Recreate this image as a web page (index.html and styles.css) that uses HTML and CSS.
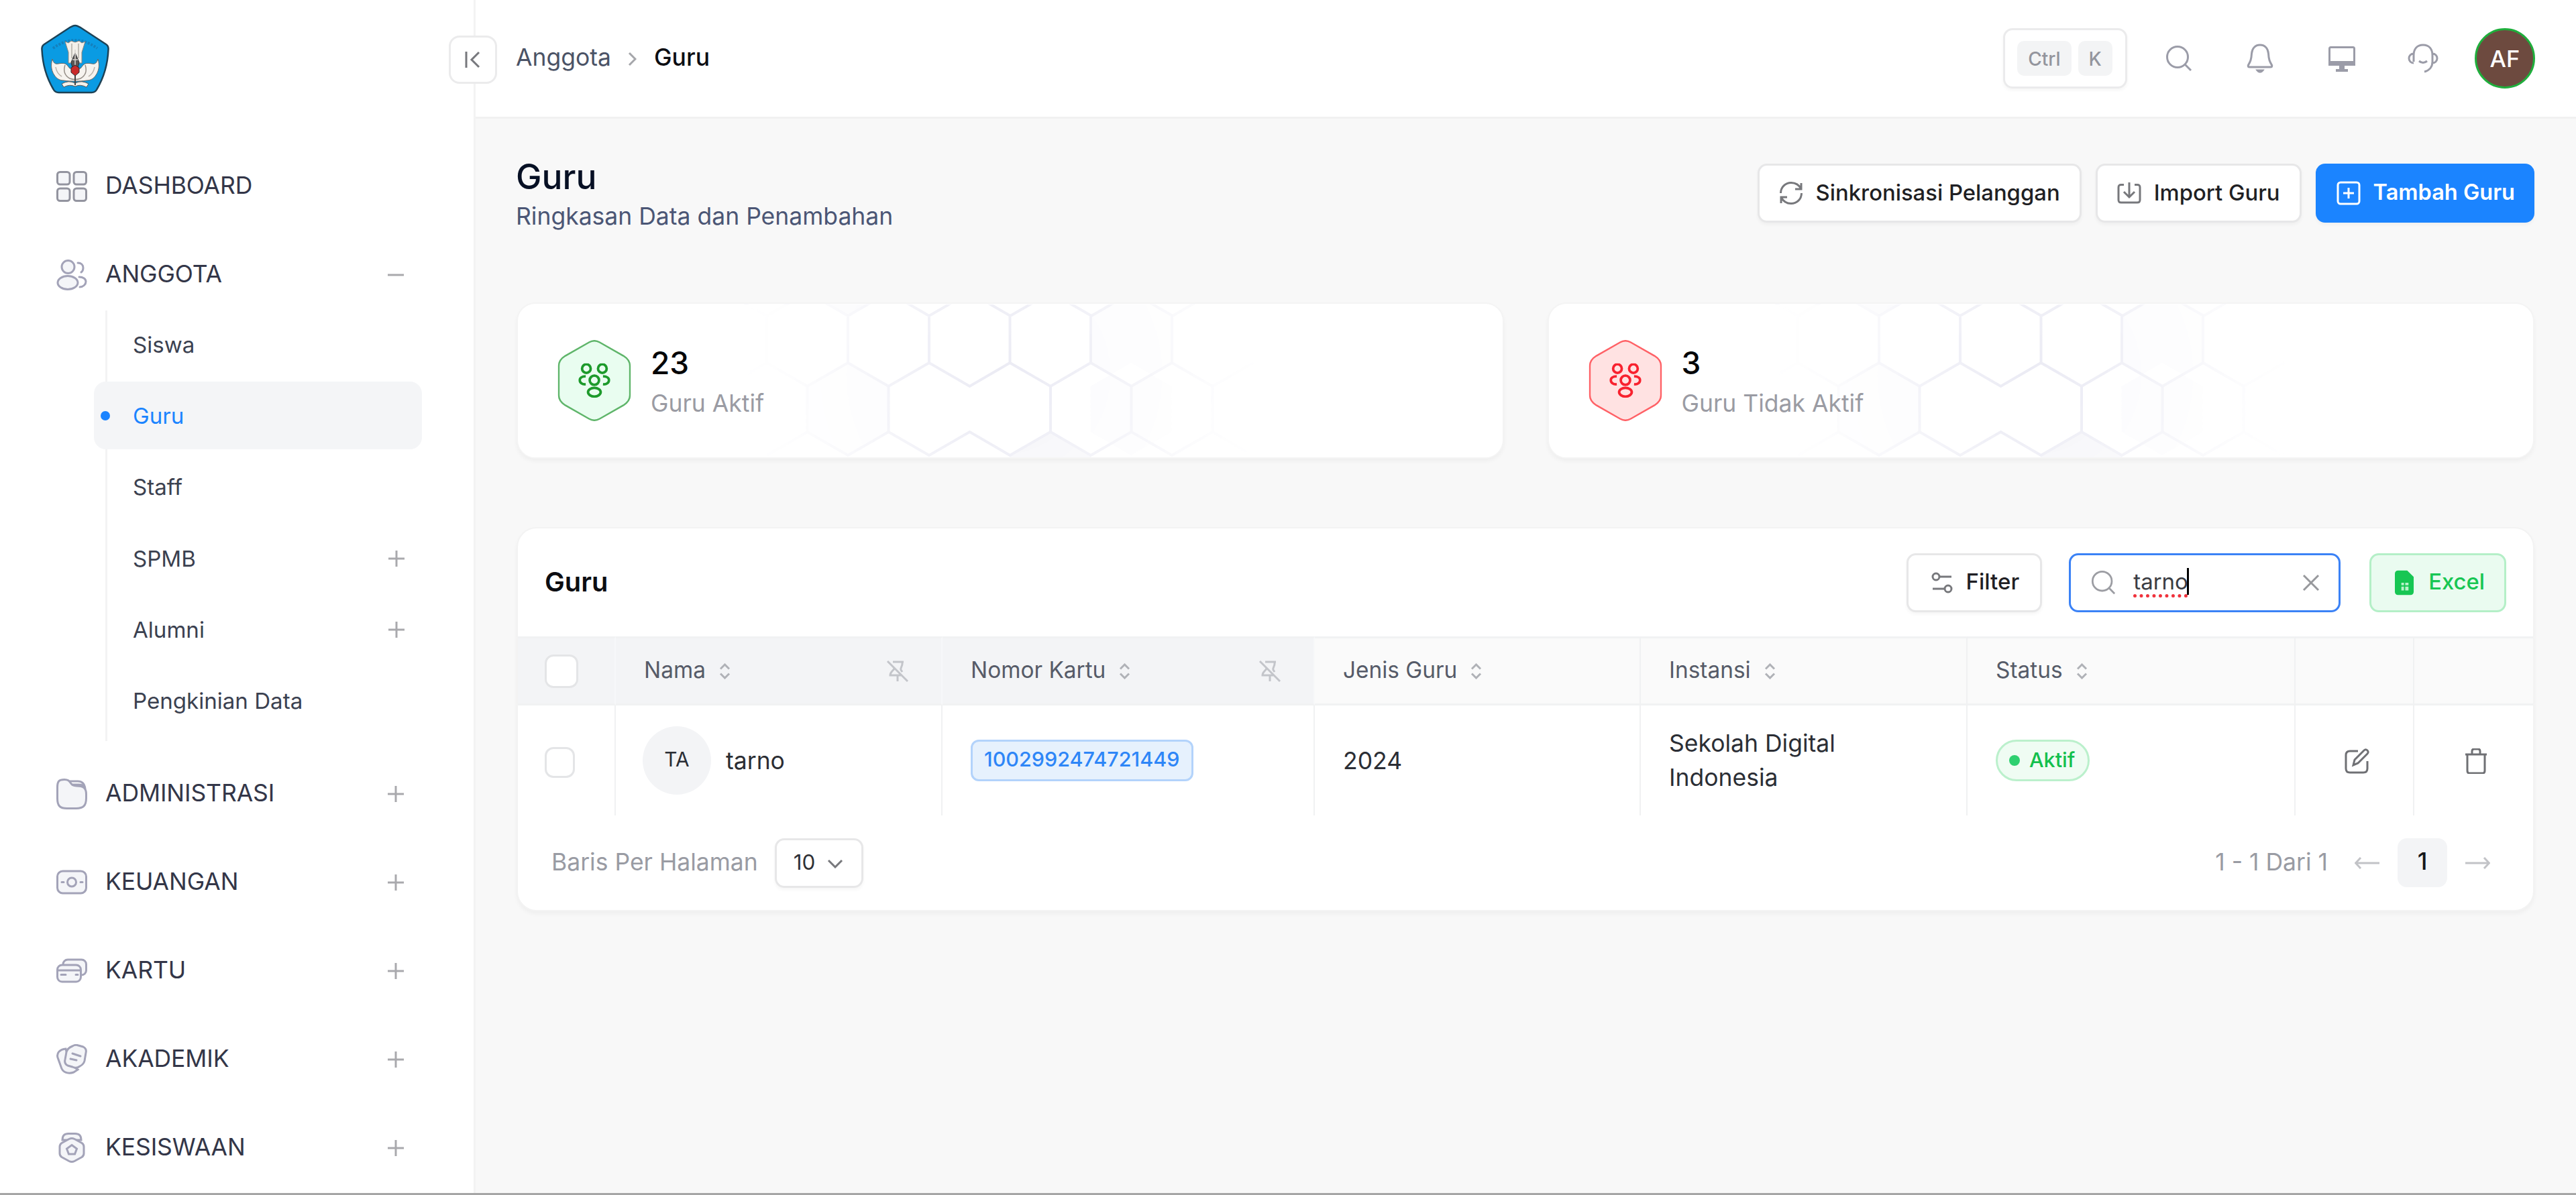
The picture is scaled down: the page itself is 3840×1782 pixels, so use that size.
FILE: index.html
```html
<!DOCTYPE html>
<html lang="id">
<head>
  <meta charset="UTF-8" />
  <meta name="viewport" content="width=device-width, initial-scale=1.0"/>
  <title>Guru</title>
  <link rel="stylesheet" href="styles.css">
</head>
<body>
  <!-- Shared shapes -->
  <svg class="defs" width="0" height="0">
    <defs>
      <symbol id="plus" viewBox="0 0 24 24"><path d="M12 0v24M0 12h24"/></symbol>
      <symbol id="sort" viewBox="0 0 17 24"><path d="M2 8.500l6.500-6.500 6.500 6.500M2 15.500l6.500 6.500 6.500-6.500"/></symbol>
      <symbol id="search" viewBox="0 0 40 40"><circle cx="18" cy="18" r="15.500"/><path d="M29 29l9 9"/></symbol>
      <symbol id="pinOff" viewBox="0 0 34 34"><path d="M2 2l30 30M17 23v9M10 3h16M24 3v3c0 4-3 5-2 9l2 3M12 12c0 4-6 5-6 11h16"/></symbol>
      <symbol id="people" viewBox="0 0 48 52">
        <circle cx="12" cy="8" r="6.500"/><circle cx="36" cy="8" r="6.500"/><circle cx="24" cy="25.500" r="7"/>
        <ellipse cx="24" cy="43.500" rx="9.500" ry="6.500"/>
        <path d="M11 19.500c-5.500 0-9 2.500-9 6s3.500 6.500 9 6M37 19.500c5.500 0 9 2.500 9 6s-3.500 6.500-9 6"/>
      </symbol>
      <symbol id="hexagon" viewBox="0 0 110 122">
        <path d="M47 3.500q8-4.500 16 0l36 20.500q9.500 6 9.500 15v44q0 9-9.500 15l-36 20.500q-8 4.500-16 0l-36-20.500q-9.500-6-9.500-15v-44q0-9 9.500-15z"/>
      </symbol>
      <radialGradient id="fade" gradientUnits="userSpaceOnUse" cx="725" cy="105" r="400">
        <stop offset="0" stop-color="#fff"/><stop offset=".3" stop-color="#fff" stop-opacity=".75"/><stop offset=".8" stop-color="#fff" stop-opacity=".1"/><stop offset="1" stop-color="#fff" stop-opacity="0"/>
      </radialGradient>
      <mask id="fadeMask" maskUnits="userSpaceOnUse" x="0" y="0" width="1466" height="232"><rect width="1466" height="232" fill="url(#fade)"/></mask>
      <symbol id="honeycomb" viewBox="0 0 1466 229">
        <g mask="url(#fadeMask)">
          <path class="comb-fill" d="M794 191l60.500 35v40h-121v-40zM432-17l60 35 60-35z"/>
          <path class="comb-soft" d="M492 88l60.500 35v68l-60.500 35-60.500-35v-68zM914 88l60.500 35v68l-60.500 35-60.500-35v-68zM854 18v70l60 35 61-35v-70l-61-35z"/>
          <path class="comb-line" d="M310-17l61 35 60.500-35 60.500 35 60.500-35 60.500 35 60.500-35 60.500 35 60.500-35 60.500 35 60.500-35 60.500 35 60.500-35
            M371 18v70M492 18v70M613 18v70M733.500 18v70M854 18v70M975 18v70
            M310 123l61-35 60.500 35 60.500-35 60.500 35 60.500-35 60.500 35 60-35 60.500 35 60-35 60.500 35 60.500-35 60.500 35 61-35
            M431.500 123v68M552.500 123v68M794 123v68M914.500 123v68M1035.500 123v68
            M371 226l60.500-35 60.500 35 60.500-35 60.500 35 60.500-35 60 35 60.500-35 60 35 60.500-35 60.500 35 60.500-35 60 35"/>
        </g>
      </symbol>
    </defs>
  </svg>

  <div class="app">
    <aside class="sidebar">
      <!-- Logo -->
      <svg class="logo" viewBox="0 0 102 104">
        <path d="M51 2c3 0 5 1.500 8 3l38 25c3 2 4 4 3.500 8-1 23-7 42-17 59-2 4-4 5-8 5h-49c-4 0-6-1-8-5-10-17-16-36-17-59-.500-4 .5-6 3.500-8l38-25c3-1.500 5-3 8-3z" fill="#0a9be3" stroke="#1d4256" stroke-width="2.500"/>
        <path d="M18 36q33-24 66 0" fill="none" stroke="#1480bd" stroke-width="4" stroke-dasharray="3 2"/>
        <path d="M36 26l5 2 4-3 6 2 6-2 4 3 5-2-5 16v16H41V42z" fill="#f3f0ea" stroke="#8a847c"/>
        <path d="M46 29v22M56 29v22" fill="none" stroke="#b3ada6" stroke-width="1.500"/>
        <path d="M17 52c2 6 4 8 9 7 6-1 10-1 13 2l4 5h16l4-5c3-3 7-3 13-2 5 1 7-1 9-7 3 10 1 18-3 24-3 5-8 8-14 8-6 1-10 1-17 1s-11 0-17-1c-6 0-11-3-14-8-4-6-6-14-3-24z" fill="#f6f3ef" stroke="#6a655f"/>
        <path d="M36 61c-3 9 0 16 7 20q8 3 16 0c7-4 10-11 7-20" fill="none" stroke="#968f88" stroke-width="1.500"/>
        <path d="M22 64c1 6 4 11 9 14M80 64c-1 6-4 11-9 14" fill="none" stroke="#b9b2aa" stroke-width="1.500"/>
        <path d="M45 57l6-14 6 14-2 8h-8z" fill="#5a5654"/><path d="M51 38v26M47 53h8" stroke="#d8d3cf" stroke-width="1.500"/>
        <path d="M51 61l6 4v7l-6 5-6-5v-7z" fill="#c92a2a"/>
        <path d="M31 89q10-6 20-1 10-5 20 1l-3 5q-10-5-17-1-8-4-17 1z" fill="#f3f0ea" stroke="#555"/>
        <path d="M51 77v14" stroke="#444" stroke-width="2"/>
      </svg>

      <nav class="menu">
        <a class="menu-item" href="#">
          <svg class="menu-icon dark" viewBox="0 0 46 46"><rect x="1.500" y="1.500" width="18.500" height="18.500" rx="4"/><rect x="26" y="1.500" width="18.500" height="18.500" rx="4"/><rect x="1.500" y="26" width="18.500" height="18.500" rx="4"/><rect x="26" y="26" width="18.500" height="18.500" rx="4"/></svg>
          <span class="menu-text">DASHBOARD</span>
        </a>
        <div class="menu-group">
          <a class="menu-item" href="#">
            <svg class="menu-icon" viewBox="0 0 46 46"><circle cx="17.500" cy="11" r="9.500"/><ellipse cx="17" cy="34.500" rx="15" ry="10"/><path class="no-fill" d="M32 5c5 0 8 3 8 7.500 0 3-1 5-3 6.500M34 26c6 0 10 3 10 7s-4 8-9 8"/></svg>
            <span class="menu-text">ANGGOTA</span>
            <svg class="toggle" viewBox="0 0 24 24"><path d="M0 12h24"/></svg>
          </a>
          <div class="submenu">
            <a class="submenu-item" href="#">Siswa</a>
            <a class="submenu-item active" href="#">Guru</a>
            <a class="submenu-item" href="#">Staff</a>
            <a class="submenu-item" href="#">SPMB<svg class="toggle"><use href="#plus"/></svg></a>
            <a class="submenu-item" href="#">Alumni<svg class="toggle"><use href="#plus"/></svg></a>
            <a class="submenu-item" href="#">Pengkinian Data</a>
          </div>
        </div>
        <a class="menu-item" href="#">
          <svg class="menu-icon" viewBox="0 0 46 46"><path d="M1.500 13C1.500 4 4 1.500 12 1.500c6 0 7 2 10 6 2 2.500 3 3 8 3.500 10 0 14.500 3 14.500 12v6c0 11-4 15.500-15 15.500H16c-11 0-14.500-4-14.500-15z"/><path class="no-fill" d="M20 4h12c7 0 10 4 11 11M24 9h10c4 0 6 1 8 4"/></svg>
          <span class="menu-text">ADMINISTRASI</span>
          <svg class="toggle"><use href="#plus"/></svg>
        </a>
        <a class="menu-item" href="#">
          <svg class="menu-icon" viewBox="0 0 46 46"><rect x="1.500" y="6" width="43" height="33" rx="8"/><circle cx="23" cy="22.500" r="6.500"/><path d="M8 22.500h3M36 22.500h3"/></svg>
          <span class="menu-text">KEUANGAN</span>
          <svg class="toggle"><use href="#plus"/></svg>
        </a>
        <a class="menu-item" href="#">
          <svg class="menu-icon" viewBox="0 0 46 46"><rect x="10" y="6" width="34.500" height="23" rx="7"/><rect x="1.500" y="14" width="35" height="25" rx="7"/><path d="M2 22h34M7 28.500h7M29 28.500h3"/></svg>
          <span class="menu-text">KARTU</span>
          <svg class="toggle"><use href="#plus"/></svg>
        </a>
        <a class="menu-item" href="#">
          <svg class="menu-icon" viewBox="0 0 46 46"><path d="M14 7C5 8 0 13 2 20l5 14c2 8 10 11 19 8l6-4-12-8z"/><path d="M24 3c3-2 6-2 9-1l7 2c4 2 5 5 4 9l-2 12c-1 4-3 6-7 8-4 3-7 3-11 1l-7-2c-4-2-5-5-4-9l2-11c1-4 4-7 9-9z"/><path d="M24 14l12 4M21 22l9 2"/></svg>
          <span class="menu-text">AKADEMIK</span>
          <svg class="toggle"><use href="#plus"/></svg>
        </a>
        <a class="menu-item" href="#">
          <svg class="menu-icon" viewBox="0 0 46 46"><path d="M9 11c0-7 3-9.500 9-9.500h10c6 0 9 2.500 9 9.500z"/><path d="M19 9.500q4-2 8 0l11 6q3 2 3 5.500v10q0 3.500-3 5.500l-11 6q-4 2-8 0l-11-6q-3-2-3-5.500v-10q0-3.500 3-5.500z"/><path d="M23 18.500l7.500 5.500-3 8h-9l-3-8z"/></svg>
          <span class="menu-text">KESISWAAN</span>
          <svg class="toggle"><use href="#plus"/></svg>
        </a>
      </nav>

      <button class="collapse"><svg viewBox="0 0 24 26"><path d="M2 1v24M21 2l-11 11 11 11"/></svg></button>
    </aside>

    <div class="content">
      <header class="topbar">
        <div class="breadcrumb">
          <span>Anggota</span>
          <svg viewBox="0 0 13 22"><path d="M2 2l9 9-9 9"/></svg>
          <span class="current">Guru</span>
        </div>
        <div class="top-actions">
          <div class="shortcut"><kbd>Ctrl</kbd><kbd>K</kbd></div>
          <div class="top-icons">
            <svg viewBox="-5 -5 50 50"><use href="#search" width="40" height="40"/></svg>
            <svg viewBox="0 0 50 50"><path d="M25 5c-8 0-12 6-12.500 13-.5 9-2 12-5 17-1 2 0 3 2 3h31c2 0 3-1 2-3-3-5-4.500-8-5-17C37 11 33 5 25 5z"/><path d="M21 43c2 3 6 3 8 0z"/></svg>
            <svg viewBox="0 0 50 50"><rect x="6.500" y="8.500" width="37" height="25" rx="2"/><path class="solid" d="M5 29h40v7H5zM21 36h8v6h-8zM16 41h18v4H16z"/></svg>
            <svg viewBox="0 0 50 50"><path d="M11 30V21C11 11 16 5 25 5s14 6 14 16v9c0 7-4 13-12 15M11 18c-4 0-7 3-7 7s3 7 7 7M39 18c4 0 7 3 7 7s-3 7-7 7M19 29q6 5 12 0"/></svg>
          </div>
          <div class="user">AF</div>
        </div>
      </header>

      <main class="page">
        <div class="page-head">
          <div>
            <h1>Guru</h1>
            <p>Ringkasan Data dan Penambahan</p>
          </div>
          <div class="page-buttons">
            <button class="btn">
              <svg viewBox="0 0 36 36"><path d="M33 3v9h-9M33 12C30 6 25 2.500 18 2.500 9.500 2.500 2.500 9 2.500 18M3 33v-9h9M3 24c3 6 8 9.500 15 9.500 8.500 0 15.500-6.500 15.500-15.500"/></svg>
              <span>Sinkronisasi Pelanggan</span>
            </button>
            <button class="btn">
              <svg viewBox="0 0 36 36"><path d="M10 5.500H6c-3 0-4 1-4 4V28c0 3 1 4 4 4h24c3 0 4-1 4-4V9.500c0-3-1-4-4-4h-4M18 2v21M10 16l8 8 8-8"/></svg>
              <span>Import Guru</span>
            </button>
            <button class="btn primary">
              <svg viewBox="0 0 36 36"><rect x="2" y="2" width="32" height="32" rx="4"/><path d="M18 10v16M10 18h16"/></svg>
              <span>Tambah Guru</span>
            </button>
          </div>
        </div>

        <!-- Summary cards -->
        <div class="stats">
          <div class="stat">
            <svg class="stat-bg" viewBox="0 0 1466 229" width="1466" height="229"><use href="#honeycomb"/></svg>
            <div class="stat-icon green">
              <svg viewBox="0 0 110 122"><use class="hex" href="#hexagon"/><use class="glyph" href="#people" x="31" y="35" width="48" height="52"/></svg>
            </div>
            <div class="stat-body">
              <strong>23</strong>
              <span>Guru Aktif</span>
            </div>
          </div>
          <div class="stat">
            <svg class="stat-bg" viewBox="0 0 1466 229" width="1466" height="229"><use href="#honeycomb"/></svg>
            <div class="stat-icon red">
              <svg viewBox="0 0 110 122"><use class="hex" href="#hexagon"/><use class="glyph" href="#people" x="31" y="35" width="48" height="52"/></svg>
            </div>
            <div class="stat-body">
              <strong>3</strong>
              <span>Guru Tidak Aktif</span>
            </div>
          </div>
        </div>

        <!-- Teacher table -->
        <section class="panel">
          <div class="toolbar">
            <h2>Guru</h2>
            <div class="tools">
              <button class="btn filter">
                <svg viewBox="0 0 32 32"><circle cx="7" cy="7" r="5"/><path d="M12 7h18M2 25h18"/><circle cx="25" cy="25" r="5"/></svg>
                <span>Filter</span>
              </button>
              <div class="search-box">
                <svg class="search-icon"><use href="#search"/></svg>
                <span class="query"><span class="typo">tarno</span></span>
                <svg class="clear" viewBox="0 0 26 26"><path d="M2 2l22 22M24 2L2 24"/></svg>
              </div>
              <button class="btn excel">
                <svg viewBox="0 0 30 38"><path class="sheet" d="M5 0h14l10 10v23c0 3-2 5-5 5H5c-3 0-5-2-5-5V5c0-3 2-5 5-5z"/><path class="cells" d="M10 19h4v4h-4zM16 19h5v4h-5zM10 25h4v6h-4zM16 25h5v6h-5z"/></svg>
                <span>Excel</span>
              </button>
            </div>
          </div>

          <table>
            <colgroup>
              <col class="col-check"><col class="col-name"><col class="col-card"><col class="col-type"><col class="col-school"><col class="col-status"><col class="col-act"><col class="col-act">
            </colgroup>
            <thead>
              <tr>
                <th class="pinned"><span class="check"></span></th>
                <th class="pinned"><div class="th"><span>Nama</span><svg class="sort"><use href="#sort"/></svg><svg class="pin"><use href="#pinOff"/></svg></div></th>
                <th class="pinned"><div class="th"><span>Nomor Kartu</span><svg class="sort"><use href="#sort"/></svg><svg class="pin"><use href="#pinOff"/></svg></div></th>
                <th><div class="th"><span>Jenis Guru</span><svg class="sort"><use href="#sort"/></svg></div></th>
                <th><div class="th"><span>Instansi</span><svg class="sort"><use href="#sort"/></svg></div></th>
                <th><div class="th"><span>Status</span><svg class="sort"><use href="#sort"/></svg></div></th>
                <th></th>
                <th></th>
              </tr>
            </thead>
            <tbody>
              <tr>
                <td><span class="check small"></span></td>
                <td><div class="person"><span class="initials">TA</span><span class="name">tarno</span></div></td>
                <td><span class="card-no">1002992474721449</span></td>
                <td>2024</td>
                <td>Sekolah Digital<br>Indonesia</td>
                <td><span class="status"><i></i>Aktif</span></td>
                <td class="action"><svg viewBox="0 0 38 38"><path d="M20 4H8C4 4 2 6 2 10v20c0 4 2 6 6 6h20c4 0 6-2 6-6V19M13 25l2-8L29 3c2-2 4-1 5 0s2 3 0 5L20 22z"/></svg></td>
                <td class="action"><svg viewBox="0 0 38 38"><path d="M3 9h32M13 8V4c0-2 1-3 3-3h6c2 0 3 1 3 3v4M6 9v24c0 2 1 4 3 4h20c2 0 3-2 3-4V9"/></svg></td>
              </tr>
            </tbody>
          </table>

          <div class="panel-foot">
            <div class="per-page">
              <span>Baris Per Halaman</span>
              <div class="select">10<svg viewBox="0 0 24 14"><path d="M2 2l10 10L22 2"/></svg></div>
            </div>
            <div class="pager">
              <span>1 - 1 Dari 1</span>
              <svg viewBox="0 0 38 18"><path d="M37 9H2M9 1L1.500 9 9 17"/></svg>
              <b>1</b>
              <svg viewBox="0 0 38 18"><path d="M1 9h35M29 1l7.500 8-7.500 8"/></svg>
            </div>
          </div>
        </section>
      </main>
    </div>
  </div>
</body>
</html>
```
FILE: styles.css
```css
:root {
  --bg: #f8f8f8;
  --border: #f0f1f2;
  --btn-border: #e7e7e8;
  --text: #2b2e35;
  --muted: #9a9ca5;
  --icon: #9b9ca8;
  --blue: #1b84ff;
  --green: #17c653;
}

* {
  margin: 0;
  padding: 0;
  box-sizing: border-box;
}

body {
  font-family: Inter, sans-serif;
  font-size: 35.5px;
  color: var(--text);
  background-color: var(--bg);
  border-bottom: 3px solid #a6a6a6;
  height: 1782px;
  overflow: hidden;
}

a {
  color: inherit;
  text-decoration: none;
}

svg {
  fill: none;
  stroke: currentColor;
  stroke-width: 3;
  flex-shrink: 0;
}

.defs {
  position: absolute;
}

.app {
  display: flex;
  height: 1779px;
}

/* Sidebar */
.sidebar {
  position: relative;
  width: 709px;
  flex-shrink: 0;
  background-color: #fff;
  border-right: 3px solid #f3f3f3;
  padding: 36px 77px 0 61px;
}

.logo {
  display: block;
  width: 102px;
  height: 104px;
  stroke-width: 1;
}

.menu {
  display: flex;
  flex-direction: column;
  gap: 26px;
  margin-top: 85px;
}

.menu-item {
  display: flex;
  align-items: center;
  height: 106px;
  padding: 0 28px 0 23px;
  color: #333648;
}

.menu-icon {
  width: 46px;
  height: 46px;
  margin-right: 27px;
  color: #a3a3b8;
  fill: #f4f5f8;
  stroke-linecap: round;
}

.menu-icon.dark {
  color: #93949f;
}

.no-fill {
  fill: none;
}

.menu-text {
  padding-bottom: 4px;
  letter-spacing: -0.1px;
}

.toggle {
  width: 24px;
  height: 24px;
  margin-left: auto;
  margin-right: -1px;
  color: #a9a9ad;
}

.submenu {
  display: flex;
  flex-direction: column;
  gap: 5.4px;
  height: 642px;
  margin-left: 96px;
  border-left: 3px solid #f3f3f4;
}

.submenu-item {
  position: relative;
  display: flex;
  align-items: center;
  height: 101px;
  margin-left: -20px;
  padding: 0 27px 0 58px;
  font-size: 33.1px;
  color: #3b4150;
}

.submenu-item.active {
  background-color: #f4f5f7;
  border-radius: 18px;
  color: var(--blue);
}

.submenu-item.active::before {
  content: "";
  position: absolute;
  left: 10px;
  width: 14px;
  height: 14px;
  border-radius: 50%;
  background-color: var(--blue);
}

.collapse {
  position: absolute;
  top: 53px;
  right: -35px;
  width: 72px;
  height: 72px;
  display: flex;
  align-items: center;
  justify-content: center;
  background-color: #fff;
  border: 3px solid #ebebec;
  border-radius: 16px;
  color: #77787d;
}

.collapse svg {
  width: 24px;
  height: 26px;
}

/* Top bar */
.content {
  flex: 1;
  min-width: 0;
}

.topbar {
  display: flex;
  align-items: center;
  justify-content: space-between;
  height: 177px;
  padding: 0 61px 0 60px;
  background-color: #fff;
  border-bottom: 3px solid #f1f1f1;
}

.breadcrumb {
  display: flex;
  align-items: center;
  color: #4b5366;
  padding-bottom: 3px;
}

.breadcrumb svg {
  width: 13px;
  height: 22px;
  margin: 4px 26px 0 25px;
  color: #a5a6aa;
}

.breadcrumb .current {
  font-weight: 500;
  color: #0c0d12;
}

.top-actions {
  display: flex;
  align-items: center;
  gap: 52px;
}

.shortcut {
  display: flex;
  align-items: center;
  justify-content: center;
  gap: 10px;
  width: 185px;
  height: 90px;
  border: 3px solid #ebebec;
  border-radius: 14px;
  box-shadow: 0 3px 5px rgba(0, 0, 0, 0.04);
}

kbd {
  height: 52px;
  padding: 0 16px;
  border-radius: 10px;
  background-color: #f3f4f5;
  color: #93959d;
  font: 500 28px/54px Inter, sans-serif;
}

.top-icons {
  display: flex;
  gap: 71.5px;
  color: var(--icon);
}

.top-icons svg {
  width: 50px;
  height: 50px;
}

.solid {
  fill: currentColor;
  stroke: none;
}

.user {
  width: 90px;
  height: 90px;
  border: 3px solid #1fae3c;
  border-radius: 50%;
  background-color: #6d4a3f;
  color: #fff;
  font-size: 34.5px;
  font-weight: 500;
  line-height: 85px;
  text-align: center;
}

/* Page head */
.page {
  padding: 55px 62px 0 61px;
}

.page-head {
  display: flex;
  justify-content: space-between;
  align-items: flex-start;
  height: 118px;
}

h1 {
  margin-left: -1px;
  font-size: 51.5px;
  font-weight: 500;
  line-height: 62px;
  color: #071024;
}

.page-head p {
  margin-left: -1px;
  line-height: 57px;
  color: #4b5675;
}

.page-buttons {
  display: flex;
  gap: 21px;
  margin-top: 12px;
}

.btn {
  display: flex;
  align-items: center;
  height: 88px;
  padding: 0 29px;
  background-color: #fff;
  border: 3px solid var(--btn-border);
  border-radius: 14px;
  box-shadow: 0 3px 5px rgba(0, 0, 0, 0.04);
  color: #1f1f24;
  font: 500 32.8px Inter, sans-serif;
}

.btn svg {
  width: 36px;
  height: 36px;
  margin-right: 19px;
  color: #77787c;
}

.btn span {
  padding-bottom: 3px;
}

.btn.primary {
  padding: 0 26px 0 28px;
  background-color: var(--blue);
  border-color: var(--blue);
  color: #fff;
  font-size: 32.5px;
  font-weight: 600;
}

.btn.primary svg {
  color: #fff;
}

/* Summary cards */
.stats {
  display: grid;
  grid-template-columns: 1fr 1fr;
  gap: 65px;
  margin-top: 101px;
}

.stat {
  position: relative;
  display: flex;
  align-items: center;
  height: 233px;
  padding-left: 59px;
  background-color: #fff;
  border: 2px solid #f4f4f4;
  border-radius: 28px;
  box-shadow: 0 4px 6px rgba(0, 0, 0, 0.04);
  overflow: hidden;
}

/* honeycomb behind the card content */
.stat-bg {
  position: absolute;
  left: 0;
  top: 0;
}

.comb-line {
  stroke: #ebebf4;
  stroke-width: 4;
}

.comb-fill {
  fill: #f5f5f9;
  stroke: none;
}

.comb-soft {
  fill: #fbfbfd;
  stroke: none;
}

.stat-icon,
.stat-body {
  position: relative;
}

.stat-icon svg {
  display: block;
  width: 110px;
  height: 121px;
}

.stat-icon .hex {
  stroke-width: 2.5;
}

.stat-icon .glyph {
  stroke-width: 3.8;
}

.stat-icon.green {
  color: #1d9a2b;
}

.stat-icon.green .hex {
  fill: #e9fdf0;
  stroke: #5fb56a;
}

.stat-icon.red {
  color: #f8222f;
}

.stat-icon.red .hex {
  fill: #ffe2e2;
  stroke: #ff6166;
}

.stat-body {
  display: flex;
  flex-direction: column;
  margin-left: 29px;
  padding-top: 5px;
}

.stat-body strong {
  font-size: 46px;
  font-weight: 500;
  line-height: 64px;
  color: #050608;
}

.stat-body span {
  line-height: 58px;
  color: #9a9ba3;
}

/* Table panel */
.panel {
  margin-top: 102px;
  background-color: #fff;
  border: 2px solid #f3f3f3;
  border-radius: 30px;
  box-shadow: 0 4px 6px rgba(0, 0, 0, 0.04);
  overflow: hidden;
}

.toolbar {
  display: flex;
  align-items: center;
  justify-content: space-between;
  height: 161px;
  padding: 0 40px;
}

h2 {
  font-size: 39.8px;
  font-weight: 600;
  color: #0c0d12;
  padding-bottom: 3px;
}

.tools {
  display: flex;
  align-items: center;
}

.filter {
  padding: 0 31px 0 34px;
  margin-right: 40px;
  font-size: 33px;
}

.filter svg {
  width: 32px;
  height: 32px;
  margin-right: 20px;
}

.search-box {
  display: flex;
  align-items: center;
  width: 405px;
  height: 88px;
  margin-right: 43px;
  padding: 0 28px 0 30px;
  border: 3px solid #3b82f6;
  border-radius: 14px;
  font-size: 33px;
  color: #3b3d43;
}

.search-icon {
  width: 37px;
  height: 37px;
  color: #9c9da3;
}

.query {
  display: flex;
  align-items: center;
  margin-left: 26px;
  padding-bottom: 4px;
}

/* text caret */
.query::after {
  content: "";
  width: 3px;
  height: 40px;
  margin-left: -2px;
  background-color: #000;
}

.typo {
  text-decoration: underline dotted #f0323c 5px;
  text-underline-offset: 7px;
  text-decoration-skip-ink: none;
}

.clear {
  width: 26px;
  height: 26px;
  margin-left: auto;
  color: #97989c;
}

.excel {
  padding: 0 29px 0 35px;
  background-color: #eafbf0;
  border-color: #b4efc7;
  box-shadow: none;
  color: var(--green);
}

.excel svg {
  width: 29px;
  height: 38px;
  margin-right: 21px;
  stroke: none;
}

.sheet {
  fill: var(--green);
}

.cells {
  fill: #b9f3cb;
}

table {
  width: 100%;
  table-layout: fixed;
  border-collapse: separate;
  border-spacing: 0;
}

.col-check { width: 146px; }
.col-name { width: 487px; }
.col-card { width: 555px; }
.col-type { width: 486px; }
.col-school { width: 487px; }
.col-status { width: 489px; }
.col-act { width: 177px; }

th,
td {
  text-align: left;
  padding: 0 42px;
  border-right: 2px solid var(--border);
}

th:first-child,
td:first-child {
  padding: 0 0 0 40px;
}

th:last-child,
td:last-child {
  border-right: none;
}

th {
  height: 103px;
  border-top: 3px solid #f1f2f3;
  border-bottom: 3px solid #f1f2f3;
  background-color: #fafafa;
  color: #565b68;
  font-size: 33.4px;
  font-weight: 400;
}

th.pinned {
  background-color: #f3f4f6;
  border-right-color: #f7f8f9;
}

.th {
  display: flex;
  align-items: center;
}

.th span {
  padding-bottom: 4px;
}

.sort {
  width: 17px;
  height: 24px;
  margin-left: 20px;
  color: #b0b2b7;
}

.pin {
  width: 34px;
  height: 34px;
  margin-left: auto;
  margin-right: 6px;
  color: #c3c5ca;
}

.check {
  display: block;
  width: 50px;
  height: 50px;
  background-color: #fff;
  border: 3px solid #e4e5e7;
  border-radius: 13px;
}

.check.small {
  width: 45px;
  height: 46px;
  margin-top: 6px;
}

td {
  height: 164px;
  line-height: 51px;
}

.person {
  display: flex;
  align-items: center;
  margin-left: -2px;
}

.initials {
  width: 102px;
  height: 102px;
  margin-right: 22px;
  border-radius: 50%;
  background-color: #f3f4f6;
  font-size: 29.8px;
  line-height: 99px;
  text-align: center;
}

.name {
  color: #2b2d33;
}

.card-no {
  display: inline-block;
  height: 62px;
  padding: 0 18px 0 17px;
  background-color: #e6f1fd;
  border: 3px solid #b3d3fb;
  border-radius: 12px;
  color: #2e86f7;
  font-size: 30.5px;
  font-weight: 500;
  line-height: 52px;
  vertical-align: middle;
}

.status {
  display: inline-flex;
  align-items: center;
  gap: 14px;
  height: 62px;
  padding: 0 19px 4px 17px;
  background-color: #effcf3;
  border: 3px solid #bbf0cc;
  border-radius: 31px;
  color: #13c04d;
  font-size: 30.5px;
  font-weight: 500;
  vertical-align: middle;
}

.status i {
  width: 16px;
  height: 16px;
  margin-top: 4px;
  border-radius: 50%;
  background-color: #2ed070;
}

.action {
  padding: 2px 0 0 73px;
  color: #6f7074;
}

.action svg {
  display: block;
  width: 38px;
  height: 38px;
}

.panel-foot {
  display: flex;
  align-items: center;
  justify-content: space-between;
  height: 141px;
  padding: 0 64px 0 50px;
  color: #999ba3;
}

.per-page {
  display: flex;
  align-items: center;
}

.per-page > span,
.pager > span {
  padding-bottom: 3px;
}

.select {
  display: flex;
  align-items: center;
  width: 132px;
  height: 74px;
  margin-left: 25px;
  padding: 0 0 3px 25px;
  border: 3px solid var(--btn-border);
  border-radius: 14px;
  box-shadow: 0 3px 5px rgba(0, 0, 0, 0.04);
  color: #2f3136;
  font-size: 31.5px;
}

.select svg {
  width: 24px;
  height: 14px;
  margin: 6px 0 0 18px;
  color: #77787c;
}

.pager {
  display: flex;
  align-items: center;
  gap: 26px;
}

.pager > span {
  margin-right: 14px;
}

.pager svg {
  width: 38px;
  height: 18px;
  color: #c2c3c7;
}

.pager b {
  width: 74px;
  height: 73px;
  border-radius: 14px;
  background-color: #f3f4f6;
  color: #16171b;
  font-weight: 500;
  line-height: 70px;
  text-align: center;
}
```
